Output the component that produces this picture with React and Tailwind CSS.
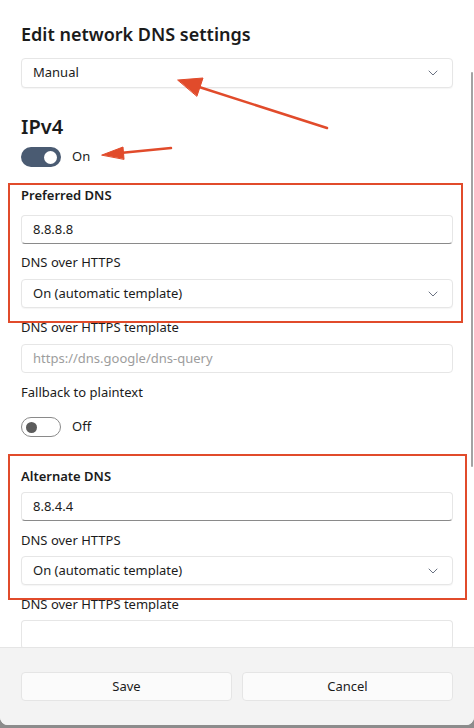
import React from 'react';

const font = { fontFamily: '"Noto Sans", "Open Sans", sans-serif' };

function Chevron() {
    return (
        <svg width="10" height="6" viewBox="0 0 10 6" className="text-gray-500">
            <path d="M1 1l4 4 4-4" fill="none" stroke="currentColor" strokeWidth="1" strokeLinecap="round" strokeLinejoin="round" />
        </svg>
    );
}

function Select({ value, className = '' }) {
    return (
        <div className={`flex items-center justify-between h-[29px] pl-[11px] pr-[14px] bg-white border border-[#e6e6e6] rounded-[4px] shadow-[0_1px_1px_rgba(0,0,0,0.04)] text-[13px] text-[#1b1b1b] ${className}`}>
            <span>{value}</span>
            <Chevron />
        </div>
    );
}

function TextBox({ value, placeholder, className = '' }) {
    return (
        <div className={`flex items-center h-[29px] pl-[11px] bg-white border border-[#e6e6e6] rounded-[4px] text-[13px] ${placeholder ? 'text-[#9d9d9d]' : 'text-[#1b1b1b] border-b-[#8a8a8a]'} ${className}`}>
            {value || placeholder}
        </div>
    );
}

function Toggle({ on, label, className = '' }) {
    return (
        <div className={`flex items-center gap-[11px] ${className}`}>
            {on ? (
                <div className="w-[40px] h-[20px] rounded-full bg-[#4a5b72] flex items-center justify-end pr-[4px]">
                    <div className="w-[13px] h-[13px] rounded-full bg-white" />
                </div>
            ) : (
                <div className="w-[40px] h-[20px] rounded-full bg-white border border-[#8a8a8a] flex items-center pl-[4px]">
                    <div className="w-[11px] h-[11px] rounded-full bg-[#5c5c5c]" />
                </div>
            )}
            <span className="text-[13px] text-[#1b1b1b]">{label}</span>
        </div>
    );
}

function Label({ children, bold, className = '' }) {
    return (
        <div className={`h-[20px] leading-[20px] text-[13px] text-[#1b1b1b] ${bold ? 'font-semibold' : ''} ${className}`}>
            {children}
        </div>
    );
}

export default function App() {
    return (
        <div className="relative w-[474px] h-[728px] bg-[#8c8c8c] overflow-hidden" style={font}>
            <div className="flex flex-col h-[725px] bg-white rounded-b-[8px] overflow-hidden">
                <div className="h-[647px] overflow-hidden px-[21px]">
                    <h1 className="mt-[22px] h-[24px] leading-[24px] text-[18px] font-semibold text-[#1b1b1b]">Edit network DNS settings</h1>
                    <Select value="Manual" className="mt-[12px] h-[30px]" />

                    <h2 className="mt-[25px] h-[28px] leading-[28px] text-[20px] font-semibold text-[#1b1b1b]">IPv4</h2>
                    <Toggle on label="On" className="mt-[6px]" />

                    <Label bold className="mt-[18px]">Preferred DNS</Label>
                    <TextBox value="8.8.8.8" className="mt-[10px] h-[28px]" />
                    <Label className="mt-[8px]">DNS over HTTPS</Label>
                    <Select value="On (automatic template)" className="mt-[7px] h-[28px]" />
                    <Label className="mt-[9px]">DNS over HTTPS template</Label>
                    <TextBox placeholder="https://dns.google/dns-query" className="mt-[7px]" />
                    <Label className="mt-[9px]">Fallback to plaintext</Label>
                    <Toggle label="Off" className="mt-[15px]" />

                    <Label bold className="mt-[29px]">Alternate DNS</Label>
                    <TextBox value="8.8.4.4" className="mt-[6px]" />
                    <Label className="mt-[9px]">DNS over HTTPS</Label>
                    <Select value="On (automatic template)" className="mt-[6px]" />
                    <Label className="mt-[9px]">DNS over HTTPS template</Label>
                    <TextBox placeholder="" className="mt-[6px]" />
                </div>

                <div className="flex-1 bg-[#f3f3f3] border-t border-[#e5e5e5] px-[21px] pt-[24px]">
                    <div className="grid grid-cols-2 gap-[10px]">
                        <button className="h-[29px] bg-[#fbfbfb] border border-[#e5e5e5] rounded-[4px] text-[13px] text-[#1b1b1b]">Save</button>
                        <button className="h-[29px] bg-[#fbfbfb] border border-[#e5e5e5] rounded-[4px] text-[13px] text-[#1b1b1b]">Cancel</button>
                    </div>
                </div>
            </div>

            {/* scrollbar */}
            <div className="absolute left-[471px] top-[72px] w-[2px] h-[395px] bg-[#a3a3a3] rounded-full" />

            {/* annotations */}
            <div className="absolute left-[8px] top-[183px] w-[455px] h-[140px] border-2 border-[#e14b2b]" />
            <div className="absolute left-[8px] top-[454px] w-[459px] h-[146px] border-2 border-[#e14b2b]" />
            <svg className="absolute left-0 top-0" width="474" height="728" viewBox="0 0 474 728">
                <g fill="#e14b2b" stroke="#e14b2b" strokeLinecap="round">
                    <line x1="327" y1="128" x2="196" y2="86" strokeWidth="2.5" />
                    <polygon points="178,80 203,78 197,96" strokeWidth="1" strokeLinejoin="round" />
                    <line x1="171" y1="148" x2="120" y2="153" strokeWidth="2.5" />
                    <polygon points="102,155 123,147 124,159" strokeWidth="1" strokeLinejoin="round" />
                </g>
            </svg>
        </div>
    );
}
